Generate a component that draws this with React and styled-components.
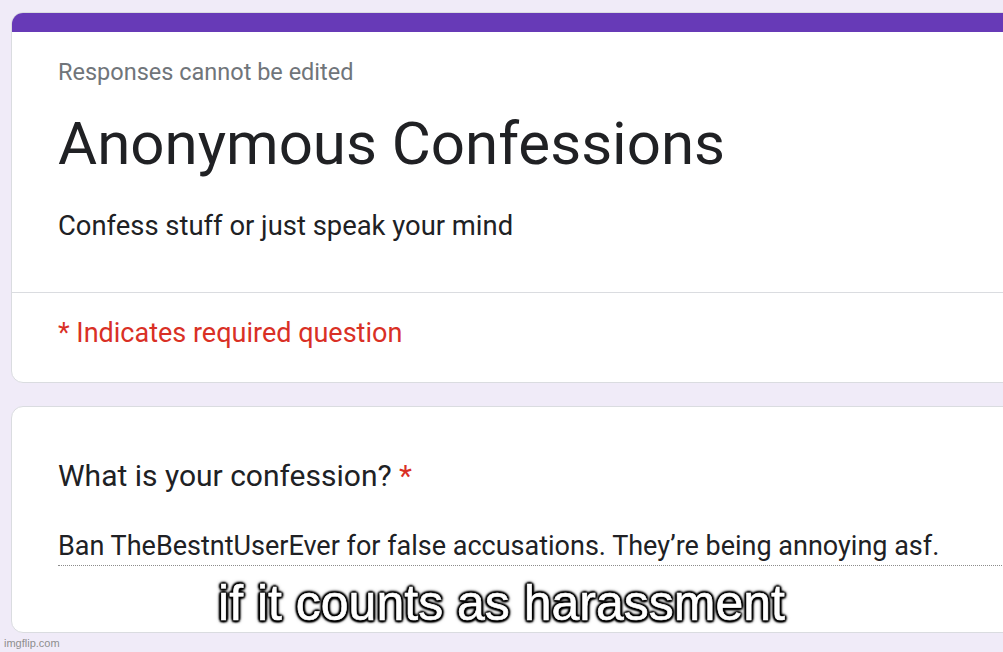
import React from 'react';
import styled, { createGlobalStyle } from 'styled-components';

const GlobalStyle = createGlobalStyle`
  html, body {
    margin: 0;
    padding: 0;
    background: #f0ebf8;
    font-family: Roboto, "Liberation Sans", Arial, sans-serif;
  }
`;

const Page = styled.div`
  position: relative;
  width: 1003px;
  height: 652px;
  overflow: hidden;
  background: #f0ebf8;
  padding: 12px 0 0 11px;
  box-sizing: border-box;
`;

const Card = styled.div`
  width: 1040px;
  background: #fff;
  border: 1px solid #dadce0;
  border-radius: 12px;
  box-sizing: border-box;
  overflow: hidden;
  margin-bottom: ${(p) => p.gap || 0}px;
  height: ${(p) => p.h}px;
`;

const TopBand = styled.div`
  height: 19px;
  background: #673ab7;
`;

const Section = styled.div`
  padding: ${(p) => p.pad || '0 0 0 46px'};
  border-bottom: ${(p) => (p.divider ? '1px solid #dadce0' : 'none')};
`;

const Note = styled.div`
  font-size: 23.5px;
  line-height: 28px;
  color: #70757a;
`;

const Title = styled.h1`
  margin: 22px 0 0;
  font-size: 60px;
  font-weight: 400;
  line-height: 72px;
  color: #202124;
`;

const Text = styled.div`
  font-size: ${(p) => p.size || 27}px;
  line-height: 32px;
  color: ${(p) => p.color || '#202124'};
  margin-top: ${(p) => p.mt || 0}px;
`;

const Star = styled.span`
  color: #d93025;
`;

const Answer = styled.div`
  font-size: 27px;
  line-height: 32px;
  color: #202124;
  padding-bottom: 3px;
  border-bottom: 1px dotted rgba(0, 0, 0, 0.45);
`;

const Caption = styled.div`
  position: absolute;
  left: 0;
  right: 0;
  top: 574px;
  text-align: center;
  font-family: "Liberation Sans", Arial, sans-serif;
  font-size: 50px;
  color: #fff;
  -webkit-text-stroke: 0.6px #fff;
  text-shadow:
    2px 0 2px #000, -2px 0 2px #000, 0 2px 2px #000, 0 -2px 2px #000,
    1.5px 1.5px 2px #000, -1.5px -1.5px 2px #000, 1.5px -1.5px 2px #000, -1.5px 1.5px 2px #000,
    0 0 5px #000;
`;

const Watermark = styled.div`
  position: absolute;
  left: 4px;
  bottom: 3px;
  font-family: "Liberation Sans", Arial, sans-serif;
  font-size: 11px;
  color: #8e8e8e;
`;

const App = () => {
  return (
    <>
      <GlobalStyle />
      <Page>
        <Card h={371} gap={23}>
          <TopBand />
          <Section divider pad="26px 0 50px 46px">
            <Note>Responses cannot be edited</Note>
            <Title>Anonymous Confessions</Title>
            <Text size={27.4} mt={30}>Confess stuff or just speak your mind</Text>
          </Section>
          <Section pad="24px 0 0 46px">
            <Text color="#d93025">* Indicates required question</Text>
          </Section>
        </Card>
        <Card h={227}>
          <Section pad="53px 0 0 46px">
            <Text size={30}>
              What is your confession? <Star>*</Star>
            </Text>
            <Text mt={38} as="div">
              <Answer>Ban TheBestntUserEver for false accusations. They’re being annoying asf.</Answer>
            </Text>
          </Section>
        </Card>
        <Caption>if it counts as harassment</Caption>
        <Watermark>imgflip.com</Watermark>
      </Page>
    </>
  );
};

export default App;
